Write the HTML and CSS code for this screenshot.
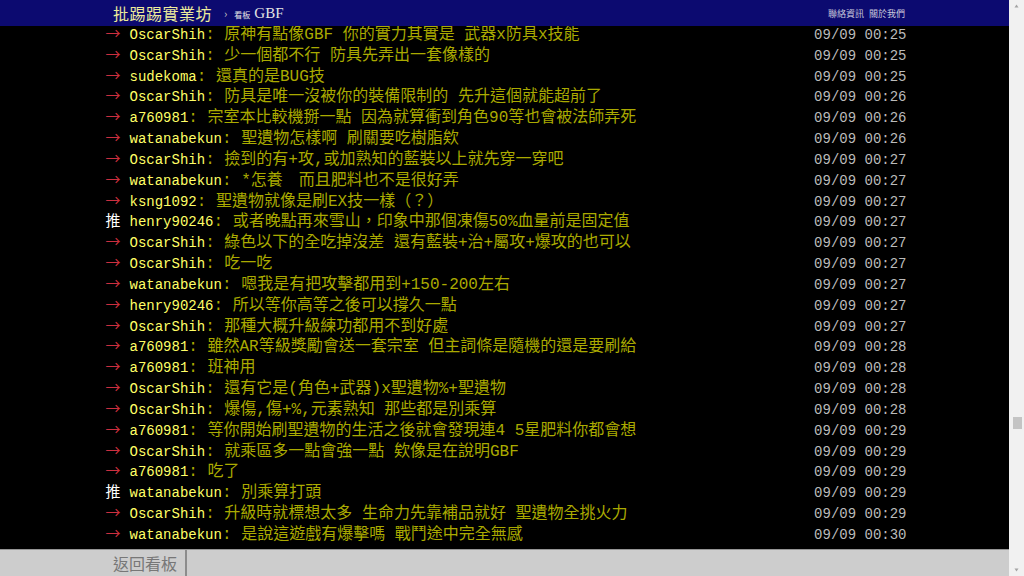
FILE: index.html
```html
<html lang="zh-Hant">

<head>
  <meta charset="UTF-8">
  <meta http-equiv="X-UA-Compatible" content="IE=edge">
  <meta name="viewport" content="width=device-width, initial-scale=1.0">
  <title>看板 GBF 文章閱讀 - 批踢踢實業坊</title>
  <link rel="stylesheet" href="styles.css">
</head>

<body>
  <div class="window">
    <div class="page">
      <div class="topbar-container">
        <div class="topbar">
          <a class="logo" href="#">批踢踢實業坊</a>
          <span class="crumb-sep">›</span>
          <a class="board" href="#"><span class="board-label">看板</span>GBF</a>
          <a class="right first" href="#">聯絡資訊</a>
          <a class="right" href="#">關於我們</a>
        </div>
      </div>

      <div class="main-content">
        <div class="push"><span class="push-tag arrow">→</span><span class="push-userid">OscarShih</span><span class="push-content">: 原神有點像GBF 你的實力其實是 武器x防具x技能</span><span class="push-ipdatetime">09/09 00:25</span></div>
        <div class="push"><span class="push-tag arrow">→</span><span class="push-userid">OscarShih</span><span class="push-content">: 少一個都不行 防具先弄出一套像樣的</span><span class="push-ipdatetime">09/09 00:25</span></div>
        <div class="push"><span class="push-tag arrow">→</span><span class="push-userid">sudekoma</span><span class="push-content">: 還真的是BUG技</span><span class="push-ipdatetime">09/09 00:25</span></div>
        <div class="push"><span class="push-tag arrow">→</span><span class="push-userid">OscarShih</span><span class="push-content">: 防具是唯一沒被你的裝備限制的 先升這個就能超前了</span><span class="push-ipdatetime">09/09 00:26</span></div>
        <div class="push"><span class="push-tag arrow">→</span><span class="push-userid">a760981</span><span class="push-content">: 宗室本比較機掰一點 因為就算衝到角色90等也會被法師弄死</span><span class="push-ipdatetime">09/09 00:26</span></div>
        <div class="push"><span class="push-tag arrow">→</span><span class="push-userid">watanabekun</span><span class="push-content">: 聖遺物怎樣啊 刷關要吃樹脂欸</span><span class="push-ipdatetime">09/09 00:26</span></div>
        <div class="push"><span class="push-tag arrow">→</span><span class="push-userid">OscarShih</span><span class="push-content">: 撿到的有+攻,或加熟知的藍裝以上就先穿一穿吧</span><span class="push-ipdatetime">09/09 00:27</span></div>
        <div class="push"><span class="push-tag arrow">→</span><span class="push-userid">watanabekun</span><span class="push-content">: *怎養　而且肥料也不是很好弄</span><span class="push-ipdatetime">09/09 00:27</span></div>
        <div class="push"><span class="push-tag arrow">→</span><span class="push-userid">ksng1092</span><span class="push-content">: 聖遺物就像是刷EX技一樣（？）</span><span class="push-ipdatetime">09/09 00:27</span></div>
        <div class="push"><span class="push-tag good">推</span><span class="push-userid">henry90246</span><span class="push-content">: 或者晚點再來雪山，印象中那個凍傷50%血量前是固定值</span><span class="push-ipdatetime">09/09 00:27</span></div>
        <div class="push"><span class="push-tag arrow">→</span><span class="push-userid">OscarShih</span><span class="push-content">: 綠色以下的全吃掉沒差 還有藍裝+治+屬攻+爆攻的也可以</span><span class="push-ipdatetime">09/09 00:27</span></div>
        <div class="push"><span class="push-tag arrow">→</span><span class="push-userid">OscarShih</span><span class="push-content">: 吃一吃</span><span class="push-ipdatetime">09/09 00:27</span></div>
        <div class="push"><span class="push-tag arrow">→</span><span class="push-userid">watanabekun</span><span class="push-content">: 嗯我是有把攻擊都用到+150-200左右</span><span class="push-ipdatetime">09/09 00:27</span></div>
        <div class="push"><span class="push-tag arrow">→</span><span class="push-userid">henry90246</span><span class="push-content">: 所以等你高等之後可以撐久一點</span><span class="push-ipdatetime">09/09 00:27</span></div>
        <div class="push"><span class="push-tag arrow">→</span><span class="push-userid">OscarShih</span><span class="push-content">: 那種大概升級練功都用不到好處</span><span class="push-ipdatetime">09/09 00:27</span></div>
        <div class="push"><span class="push-tag arrow">→</span><span class="push-userid">a760981</span><span class="push-content">: 雖然AR等級獎勵會送一套宗室 但主詞條是隨機的還是要刷給</span><span class="push-ipdatetime">09/09 00:28</span></div>
        <div class="push"><span class="push-tag arrow">→</span><span class="push-userid">a760981</span><span class="push-content">: 班神用</span><span class="push-ipdatetime">09/09 00:28</span></div>
        <div class="push"><span class="push-tag arrow">→</span><span class="push-userid">OscarShih</span><span class="push-content">: 還有它是(角色+武器)x聖遺物%+聖遺物</span><span class="push-ipdatetime">09/09 00:28</span></div>
        <div class="push"><span class="push-tag arrow">→</span><span class="push-userid">OscarShih</span><span class="push-content">: 爆傷,傷+%,元素熟知 那些都是別乘算</span><span class="push-ipdatetime">09/09 00:28</span></div>
        <div class="push"><span class="push-tag arrow">→</span><span class="push-userid">a760981</span><span class="push-content">: 等你開始刷聖遺物的生活之後就會發現連4 5星肥料你都會想</span><span class="push-ipdatetime">09/09 00:29</span></div>
        <div class="push"><span class="push-tag arrow">→</span><span class="push-userid">OscarShih</span><span class="push-content">: 就乘區多一點會強一點 欸像是在說明GBF</span><span class="push-ipdatetime">09/09 00:29</span></div>
        <div class="push"><span class="push-tag arrow">→</span><span class="push-userid">a760981</span><span class="push-content">: 吃了</span><span class="push-ipdatetime">09/09 00:29</span></div>
        <div class="push"><span class="push-tag good">推</span><span class="push-userid">watanabekun</span><span class="push-content">: 別乘算打頭</span><span class="push-ipdatetime">09/09 00:29</span></div>
        <div class="push"><span class="push-tag arrow">→</span><span class="push-userid">OscarShih</span><span class="push-content">: 升級時就標想太多 生命力先靠補品就好 聖遺物全挑火力</span><span class="push-ipdatetime">09/09 00:29</span></div>
        <div class="push"><span class="push-tag arrow">→</span><span class="push-userid">watanabekun</span><span class="push-content">: 是說這遊戲有爆擊嗎 戰鬥途中完全無感</span><span class="push-ipdatetime">09/09 00:30</span></div>
      </div>

      <div class="action-bar">
        <div class="action-bar-inner">
          <a class="btn-back" href="#">返回看板</a>
        </div>
      </div>
    </div>

    <div class="scrollbar">
      <svg class="scroll-arrow" width="15" height="13" viewBox="0 0 15 13"><polygon points="5.5,7.5 9.5,7.5 7.5,4.5" fill="#a3a3a3" /></svg>
      <div class="scroll-track">
        <div class="scroll-thumb"></div>
      </div>
      <svg class="scroll-arrow" width="15" height="13" viewBox="0 0 15 13"><polygon points="5.5,5.5 9.5,5.5 7.5,8.5" fill="#a3a3a3" /></svg>
    </div>
  </div>
</body>

</html>
```

FILE: styles.css
```css
html,
body {
  margin: 0;
  height: 100%;
  overflow: hidden;
  background-color: #000;
}

a {
  text-decoration: none;
}

.window {
  display: flex;
  flex-direction: row;
  height: 100%;
}

.page {
  flex: 1;
  position: relative;
  overflow: hidden;
  background-color: #000;
}

/* top bar */
.topbar-container {
  position: absolute;
  top: 0;
  left: 0;
  right: 0;
  height: 26px;
  background-color: #0c0a70;
  z-index: 2;
}

.topbar {
  width: 801px;
  height: 26px;
  margin: 0 auto;
  display: flex;
  flex-direction: row;
  align-items: center;
  font-family: "Noto Sans CJK TC", sans-serif;
}

.logo {
  margin-left: 9px;
  color: #ecec9c;
  font-size: 16px;
  letter-spacing: 0.5px;
}

.crumb-sep {
  margin-left: 12px;
  color: #c8c8c8;
  font-size: 11px;
}

.board {
  margin-left: 7px;
  color: #e4e4e4;
  font-family: "Liberation Serif", serif;
  font-size: 15px;
}

.board-label {
  font-family: "Noto Sans CJK TC", sans-serif;
  font-size: 8px;
  margin-right: 4px;
}

.right {
  color: #c8c8dc;
  font-size: 9px;
  margin-left: 5px;
}

.right.first {
  margin-left: auto;
}

/* comments */
.main-content {
  width: 801px;
  margin: 0 auto;
  padding: 23px 0 0 3px;
}

.push {
  display: flex;
  flex-direction: row;
  align-items: baseline;
  height: 20.83px;
  line-height: 20.83px;
  white-space: pre;
}

.push-tag {
  width: 24px;
  flex-shrink: 0;
  font-family: "Noto Sans CJK TC", sans-serif;
  font-size: 15px;
}

.arrow {
  color: #cc2f3f;
}

.good {
  color: #fff;
}

.push-userid {
  color: #ffff66;
  font-family: "Liberation Mono", monospace;
  font-size: 14px;
}

.push-content {
  color: #aaaa00;
  font-family: "Liberation Mono", "Noto Sans CJK TC", monospace;
  font-size: 16px;
}

.push-ipdatetime {
  margin-left: auto;
  color: #bbb;
  font-family: "Liberation Mono", monospace;
  font-size: 14px;
}

/* bottom bar */
.action-bar {
  position: absolute;
  left: 0;
  right: 0;
  bottom: 0;
  height: 26px;
  background-color: #cdcdcd;
  border-top: 1px solid #959595;
  z-index: 2;
}

.action-bar-inner {
  width: 801px;
  height: 100%;
  margin: 0 auto;
  display: flex;
  flex-direction: row;
}

.btn-back {
  display: flex;
  align-items: center;
  padding: 0 8px 0 9px;
  border-right: 2px solid #8c8c8c;
  color: #777;
  font-family: "Noto Sans CJK TC", sans-serif;
  font-size: 16px;
}

/* scrollbar */
.scrollbar {
  width: 15px;
  flex-shrink: 0;
  display: flex;
  flex-direction: column;
  background-color: #f1f1f1;
}

.scroll-arrow {
  display: block;
  flex-shrink: 0;
}

.scroll-track {
  flex: 1;
}

.scroll-thumb {
  width: 9px;
  height: 12px;
  margin: 404px 1px 0 4px;
  background-color: #c4c4c4;
}
```
